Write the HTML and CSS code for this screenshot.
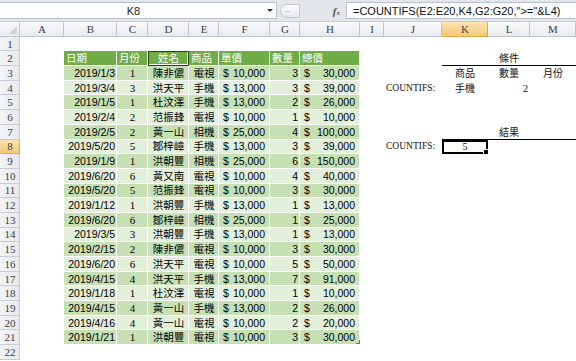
FILE: index.html
```html
<!DOCTYPE html>
<html lang="zh-Hant">
<head>
    <meta charset="UTF-8">
    <title>COUNTIFS</title>
    <link rel="stylesheet" href="styles.css">
</head>
<body>
    <div class="formula-bar">
        <div class="name-box"><span class="cell-ref">K8</span><span class="drop"></span></div>
        <div class="fx-area"><span class="pill">–</span><span class="fx">f<small>x</small></span></div>
        <div class="formula">=COUNTIFS(E2:E20,K4,G2:G20,"&gt;="&amp;L4)</div>
    </div>

    <table class="sheet">
        <colgroup>
            <col style="width:20px"><col style="width:44px"><col style="width:53px"><col style="width:31px">
            <col style="width:41px"><col style="width:30px"><col style="width:51px"><col style="width:30px">
            <col style="width:60px"><col style="width:24px"><col style="width:58px"><col style="width:46px">
            <col style="width:42px"><col style="width:46px">
        </colgroup>
        <tr class="col-hdr">
            <th class="corner"></th><th>A</th><th>B</th><th>C</th><th>D</th><th>E</th><th>F</th><th>G</th>
            <th>H</th><th>I</th><th>J</th><th class="on">K</th><th>L</th><th>M</th>
        </tr>
        <tr><th class="rh">1</th><td colspan="13"></td></tr>
        <tr class="head">
            <th class="rh">2</th><td></td>
            <td class="g">日期</td><td class="g">月份</td><td class="g c boxed">姓名</td><td class="g">商品</td>
            <td class="g">單價</td><td class="g">數量</td><td class="g">總價</td>
            <td></td><td></td><td class="note c line" colspan="3">條件</td>
        </tr>
        <tr class="b1">
            <th class="rh">3</th><td></td>
            <td class="r">2019/1/3</td><td class="c mon">1</td><td class="c">陳非儂</td><td class="c">電視</td>
            <td class="acc"><span class="cur">$</span>10,000</td><td class="r">3</td><td class="acc"><span class="cur">$</span>30,000</td>
            <td></td><td></td><td class="note c">商品</td><td class="note c">數量</td><td class="note c">月份</td>
        </tr>
        <tr class="b2">
            <th class="rh">4</th><td></td>
            <td class="r">2019/3/4</td><td class="c mon">3</td><td class="c">洪天平</td><td class="c">手機</td>
            <td class="acc"><span class="cur">$</span>13,000</td><td class="r">3</td><td class="acc"><span class="cur">$</span>39,000</td>
            <td></td><td class="note label">COUNTIFS:</td><td class="note c">手機</td><td class="note r">2</td><td></td>
        </tr>
        <tr class="b1">
            <th class="rh">5</th><td></td>
            <td class="r">2019/1/5</td><td class="c mon">1</td><td class="c">杜汶澤</td><td class="c">手機</td>
            <td class="acc"><span class="cur">$</span>13,000</td><td class="r">2</td><td class="acc"><span class="cur">$</span>26,000</td>
            <td colspan="5"></td>
        </tr>
        <tr class="b2">
            <th class="rh">6</th><td></td>
            <td class="r">2019/2/4</td><td class="c mon">2</td><td class="c">范振鋒</td><td class="c">電視</td>
            <td class="acc"><span class="cur">$</span>10,000</td><td class="r">1</td><td class="acc"><span class="cur">$</span>10,000</td>
            <td colspan="5"></td>
        </tr>
        <tr class="b1">
            <th class="rh">7</th><td></td>
            <td class="r">2019/2/5</td><td class="c mon">2</td><td class="c">黃一山</td><td class="c">相機</td>
            <td class="acc"><span class="cur">$</span>25,000</td><td class="r">4</td><td class="acc"><span class="cur">$</span>100,000</td>
            <td></td><td></td><td class="note c line" colspan="3">結果</td>
        </tr>
        <tr class="b2">
            <th class="rh on">8</th><td></td>
            <td class="r">2019/5/20</td><td class="c mon">5</td><td class="c">鄒梓嶂</td><td class="c">手機</td>
            <td class="acc"><span class="cur">$</span>13,000</td><td class="r">3</td><td class="acc"><span class="cur">$</span>39,000</td>
            <td></td><td class="note label">COUNTIFS:</td><td class="note c sel">5</td><td></td><td></td>
        </tr>
        <tr class="b1">
            <th class="rh">9</th><td></td>
            <td class="r">2019/1/9</td><td class="c mon">1</td><td class="c">洪朝豐</td><td class="c">相機</td>
            <td class="acc"><span class="cur">$</span>25,000</td><td class="r">6</td><td class="acc"><span class="cur">$</span>150,000</td>
            <td colspan="5"></td>
        </tr>
        <tr class="b2">
            <th class="rh">10</th><td></td>
            <td class="r">2019/6/20</td><td class="c mon">6</td><td class="c">黃又南</td><td class="c">電視</td>
            <td class="acc"><span class="cur">$</span>10,000</td><td class="r">4</td><td class="acc"><span class="cur">$</span>40,000</td>
            <td colspan="5"></td>
        </tr>
        <tr class="b1">
            <th class="rh">11</th><td></td>
            <td class="r">2019/5/20</td><td class="c mon">5</td><td class="c">范振鋒</td><td class="c">電視</td>
            <td class="acc"><span class="cur">$</span>10,000</td><td class="r">3</td><td class="acc"><span class="cur">$</span>30,000</td>
            <td colspan="5"></td>
        </tr>
        <tr class="b2">
            <th class="rh">12</th><td></td>
            <td class="r">2019/1/12</td><td class="c mon">1</td><td class="c">洪朝豐</td><td class="c">手機</td>
            <td class="acc"><span class="cur">$</span>13,000</td><td class="r">1</td><td class="acc"><span class="cur">$</span>13,000</td>
            <td colspan="5"></td>
        </tr>
        <tr class="b1">
            <th class="rh">13</th><td></td>
            <td class="r">2019/6/20</td><td class="c mon">6</td><td class="c">鄒梓嶂</td><td class="c">相機</td>
            <td class="acc"><span class="cur">$</span>25,000</td><td class="r">1</td><td class="acc"><span class="cur">$</span>25,000</td>
            <td colspan="5"></td>
        </tr>
        <tr class="b2">
            <th class="rh">14</th><td></td>
            <td class="r">2019/3/5</td><td class="c mon">3</td><td class="c">洪朝豐</td><td class="c">手機</td>
            <td class="acc"><span class="cur">$</span>13,000</td><td class="r">1</td><td class="acc"><span class="cur">$</span>13,000</td>
            <td colspan="5"></td>
        </tr>
        <tr class="b1">
            <th class="rh">15</th><td></td>
            <td class="r">2019/2/15</td><td class="c mon">2</td><td class="c">陳非儂</td><td class="c">電視</td>
            <td class="acc"><span class="cur">$</span>10,000</td><td class="r">3</td><td class="acc"><span class="cur">$</span>30,000</td>
            <td colspan="5"></td>
        </tr>
        <tr class="b2">
            <th class="rh">16</th><td></td>
            <td class="r">2019/6/20</td><td class="c mon">6</td><td class="c">洪天平</td><td class="c">電視</td>
            <td class="acc"><span class="cur">$</span>10,000</td><td class="r">5</td><td class="acc"><span class="cur">$</span>50,000</td>
            <td colspan="5"></td>
        </tr>
        <tr class="b1">
            <th class="rh">17</th><td></td>
            <td class="r">2019/4/15</td><td class="c mon">4</td><td class="c">洪天平</td><td class="c">手機</td>
            <td class="acc"><span class="cur">$</span>13,000</td><td class="r">7</td><td class="acc"><span class="cur">$</span>91,000</td>
            <td colspan="5"></td>
        </tr>
        <tr class="b2">
            <th class="rh">18</th><td></td>
            <td class="r">2019/1/18</td><td class="c mon">1</td><td class="c">杜汶澤</td><td class="c">電視</td>
            <td class="acc"><span class="cur">$</span>10,000</td><td class="r">1</td><td class="acc"><span class="cur">$</span>10,000</td>
            <td colspan="5"></td>
        </tr>
        <tr class="b1">
            <th class="rh">19</th><td></td>
            <td class="r">2019/4/15</td><td class="c mon">4</td><td class="c">黃一山</td><td class="c">手機</td>
            <td class="acc"><span class="cur">$</span>13,000</td><td class="r">2</td><td class="acc"><span class="cur">$</span>26,000</td>
            <td colspan="5"></td>
        </tr>
        <tr class="b2">
            <th class="rh">20</th><td></td>
            <td class="r">2019/4/16</td><td class="c mon">4</td><td class="c">黃一山</td><td class="c">電視</td>
            <td class="acc"><span class="cur">$</span>10,000</td><td class="r">2</td><td class="acc"><span class="cur">$</span>20,000</td>
            <td colspan="5"></td>
        </tr>
        <tr class="b1">
            <th class="rh">21</th><td></td>
            <td class="r">2019/1/21</td><td class="c mon">1</td><td class="c">洪朝豐</td><td class="c">電視</td>
            <td class="acc"><span class="cur">$</span>10,000</td><td class="r">3</td><td class="acc last"><span class="cur">$</span>30,000</td>
            <td colspan="5"></td>
        </tr>
        <tr><th class="rh">22</th><td colspan="13"></td></tr>
    </table>
</body>
</html>
```

FILE: styles.css
```css
body {
    margin: 0;
    width: 576px;
    height: 361px;
    overflow: hidden;
    background: #fff;
    color: #000;
    font-family: "Liberation Sans", "Noto Sans CJK TC", sans-serif;
    font-size: 10.5px;
}

/* formula bar */
.formula-bar {
    display: flex;
    height: 22px;
    box-sizing: border-box;
    padding: 2px 0 2px;
    background: #e3e7ec;
    border-bottom: 1px solid #c7cdd5;
}
.name-box {
    width: 277px;
    display: flex;
    align-items: center;
    background: #fff;
    border: 1px solid #b9c1cc;
    border-left: none;
    box-sizing: border-box;
}
.cell-ref {
    flex: 1;
    text-align: center;
    font-size: 11px;
    color: #222;
}
.drop {
    width: 0;
    height: 0;
    margin-right: 3px;
    border-left: 3px solid transparent;
    border-right: 3px solid transparent;
    border-top: 3px solid #333;
}
.fx-area {
    width: 69px;
    display: flex;
    align-items: center;
    justify-content: space-between;
    padding: 0 6px 0 3px;
    box-sizing: border-box;
}
.pill {
    width: 20px;
    height: 14px;
    border: 1px solid #c3c9d2;
    border-radius: 8px 0 0 8px;
    background: linear-gradient(#fbfcfd, #e6e9ee);
    color: #b3b9c2;
    font-size: 9px;
    line-height: 13px;
    text-indent: 4px;
    box-sizing: border-box;
}
.fx {
    font-family: "Liberation Serif", serif;
    font-style: italic;
    font-weight: bold;
    font-size: 11px;
    color: #555;
}
.fx small {
    font-size: 7px;
}
.formula {
    flex: 1;
    background: #fff;
    border: 1px solid #b9c1cc;
    border-right: none;
    padding-left: 6px;
    font-size: 11px;
    line-height: 16px;
    color: #111;
    white-space: nowrap;
    overflow: hidden;
}

/* sheet */
.sheet {
    width: 576px;
    table-layout: fixed;
    border-collapse: separate;
    border-spacing: 0;
}
.sheet tr {
    height: 14.7px;
}
.sheet td,
.sheet th {
    padding: 0 2px;
    line-height: 13px;
    white-space: nowrap;
    overflow: hidden;
    font-weight: normal;
}
.col-hdr {
    height: 15px;
}
.col-hdr th {
    background: linear-gradient(#f9fafb, #e6e9ed);
    box-shadow: inset -1px -1px 0 #c0c7d0;
    font-family: "Liberation Serif", serif;
    font-size: 11px;
    color: #3a3f47;
    text-align: center;
}
.col-hdr .corner {
    position: relative;
}
.col-hdr .corner::after {
    content: "";
    position: absolute;
    right: 3px;
    bottom: 3px;
    border-left: 8px solid transparent;
    border-bottom: 8px solid #d0d4da;
}
.rh {
    background: linear-gradient(90deg, #f3f4f6, #e6e8ec);
    box-shadow: inset -1px -1px 0 #c6ccd4;
    font-family: "Liberation Serif", serif;
    font-size: 11px;
    color: #3a3f47;
    text-align: center;
}
.col-hdr th.on,
.rh.on {
    background: linear-gradient(#fbe4b4, #f4c76f);
    box-shadow: inset -1px -1px 0 #e0a94a;
}

/* data table */
.g {
    background: #70ad47;
    color: #fff;
    font-weight: bold;
    box-shadow: inset -1px -1px 0 #fff;
}
.boxed {
    box-shadow: inset 0 0 0 1px #2c4419, inset -2px -2px 0 #fff;
}
.b1 td:nth-child(n+3):nth-child(-n+9) {
    background: #c6e0b4;
    box-shadow: inset -1px -1px 0 #fff;
}
.b2 td:nth-child(n+3):nth-child(-n+9) {
    background: #e2efda;
    box-shadow: inset -1px -1px 0 #fff;
}
.r {
    text-align: right;
}
.c {
    text-align: center;
}
.mon {
    font-family: "Liberation Serif", serif;
    font-size: 11px;
}
.acc {
    text-align: right;
    padding-right: 5px !important;
}
.acc .cur {
    float: left;
    padding-left: 2px;
}
.last {
    position: relative;
}
.last::after {
    content: "";
    position: absolute;
    right: 0;
    bottom: 1px;
    width: 3px;
    height: 3px;
    border-right: 1px solid #4a78b5;
    border-bottom: 1px solid #4a78b5;
}

/* criteria area */
.note {
    font-family: "Liberation Serif", "Noto Sans CJK TC", serif;
    font-size: 10px;
    color: #111;
}
.label {
    text-align: right;
    padding-right: 8px !important;
    font-size: 9.5px;
}
.line {
    box-shadow: inset 0 -1px 0 #000;
}
.sel {
    position: relative;
    box-shadow: inset 0 0 0 2px #000;
}
.sel::after {
    content: "";
    position: absolute;
    right: -1px;
    bottom: -1px;
    width: 4px;
    height: 4px;
    background: #000;
    border: 1px solid #fff;
}
```
